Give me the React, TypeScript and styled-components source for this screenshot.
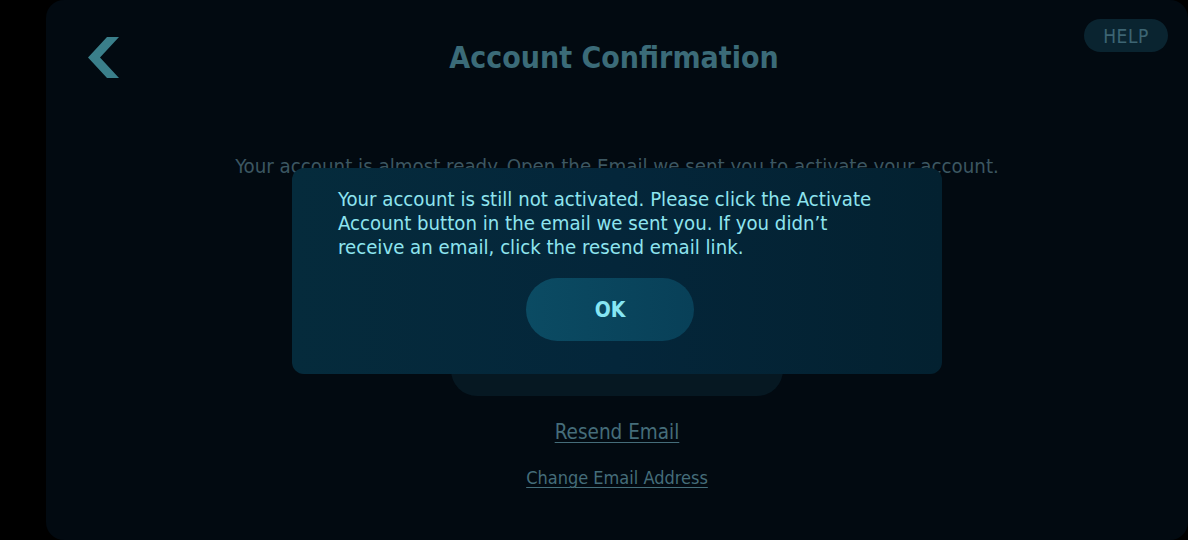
import React from "react";
import styled, { createGlobalStyle } from "styled-components";

const Global = createGlobalStyle`
  html, body { margin: 0; padding: 0; background: #000; }
  body { font-family: "DejaVu Sans Condensed", "DejaVu Sans", sans-serif; font-stretch: condensed; }
  * { box-sizing: border-box; }
`;

const Page = styled.div`
  width: 1188px;
  height: 540px;
  display: flex;
  background: #000;
  overflow: hidden;
`;

const Strip = styled.div`
  width: 46px;
  flex: none;
  background: #000;
`;

const Screen = styled.div`
  position: relative;
  flex: 1;
  height: 540px;
  background: #020a11;
  border-radius: 18px;
  display: flex;
  flex-direction: column;
  align-items: center;
`;

const Header = styled.header`
  width: 100%;
  height: 100px;
  display: grid;
  grid-template-columns: 1fr auto 1fr;
  align-items: start;
`;

const Back = styled.button`
  justify-self: start;
  margin: 37px 0 0 42px;
  padding: 0;
  border: 0;
  background: none;
  width: 32px;
  height: 42px;
  display: flex;
  cursor: pointer;
`;

const Title = styled.h1`
  margin: 38px 6px 0 0;
  font-size: 30px;
  line-height: 40px;
  font-weight: 700;
  color: #3b6b78;
`;

const Help = styled.button`
  justify-self: end;
  margin: 19px 20px 0 0;
  width: 84px;
  height: 33px;
  border: 0;
  border-radius: 17px;
  background: #0a2430;
  color: #3d6573;
  font-family: inherit;
  font-size: 19px;
  letter-spacing: 0.5px;
`;

const Subtitle = styled.p`
  margin: 52px 0 0;
  font-size: 20.3px;
  line-height: 28px;
  color: #3c5762;
`;

const BigButton = styled.div`
  margin-top: 160px;
  width: 332px;
  height: 56px;
  border-radius: 26px;
  background: #061822;
`;

const LinkText = styled.a<{ $size: number; $gap: number }>`
  margin-top: ${(p) => p.$gap}px;
  font-size: ${(p) => p.$size}px;
  line-height: 26px;
  color: #456d7a;
  text-decoration: underline;
  text-underline-offset: 3px;
  text-decoration-thickness: 1px;
  cursor: pointer;
`;

const Modal = styled.div`
  position: absolute;
  top: 168px;
  left: 50%;
  transform: translateX(-50%);
  width: 650px;
  height: 206px;
  border-radius: 12px;
  background: linear-gradient(90deg, #052b3c 0%, #04263a 50%, #032130 100%);
  padding: 19px 46px 33px;
  display: flex;
  flex-direction: column;
  align-items: center;
`;

const ModalText = styled.p`
  align-self: stretch;
  margin: 0;
  font-size: 20.2px;
  line-height: 24px;
  color: #8ee4ef;
`;

const OkButton = styled.button`
  margin: 19px 14px 0 0;
  width: 168px;
  height: 63px;
  border: 0;
  border-radius: 32px;
  background: linear-gradient(90deg, #0b4b63 0%, #084058 100%);
  color: #86e6f4;
  font-family: inherit;
  font-weight: 700;
  font-size: 21px;
  cursor: pointer;
`;

export default function App() {
  return (
    <>
      <Global />
      <Page>
        <Strip />
        <Screen>
          <Header>
            <Back aria-label="Back">
              <svg width="32" height="42" viewBox="0 0 32 42">
                <polygon points="19,0 31,0 12,20.5 31,41 19,41 0,20.5" fill="#3a7f8a" />
              </svg>
            </Back>
            <Title>Account Confirmation</Title>
            <Help>HELP</Help>
          </Header>
          <Subtitle>Your account is almost ready. Open the Email we sent you to activate your account.</Subtitle>
          <BigButton />
          <LinkText $size={20.5} $gap={23}>Resend Email</LinkText>
          <LinkText $size={18} $gap={20}>Change Email Address</LinkText>
          <Modal>
            <ModalText>
              Your account is still not activated. Please click the Activate Account button in the email we sent you. If you didn’t receive an email, click the resend email link.
            </ModalText>
            <OkButton>OK</OkButton>
          </Modal>
        </Screen>
      </Page>
    </>
  );
}
